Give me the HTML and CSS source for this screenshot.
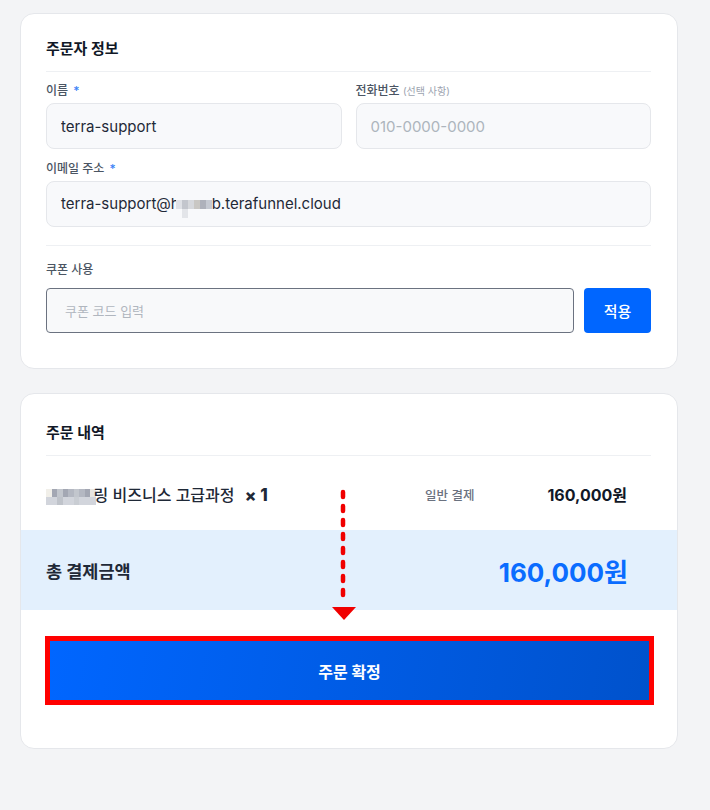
FILE: index.html
```html
<!DOCTYPE html>
<html lang="ko">

<head>
    <meta charset="UTF-8">
    <meta name="viewport" content="width=device-width, initial-scale=1.0">
    <title>주문서</title>
    <link rel="stylesheet" href="styles.css">
</head>

<body>
    <div class="wrap">
        <!-- 주문자 정보 -->
        <div class="card card-info">
            <h2 class="card-title">주문자 정보</h2>
            <div class="row">
                <div class="field">
                    <label>이름 <span class="req">*</span></label>
                    <input type="text" class="ipt" value="terra-support">
                </div>
                <div class="field">
                    <label>전화번호 <span class="opt">(선택 사항)</span></label>
                    <input type="text" class="ipt" placeholder="010-0000-0000">
                </div>
            </div>
            <div class="field field-mail">
                <label>이메일 주소 <span class="req">*</span></label>
                <div class="ipt">terra-support@h<span class="blur blur-mail"><i></i><i></i><i></i><i></i><i></i><i></i><i></i><i></i><i></i><i></i><i></i><i></i></span>b.terafunnel.cloud</div>
            </div>
            <div class="coupon">
                <label>쿠폰 사용</label>
                <div class="coupon-row">
                    <input type="text" class="coupon-ipt" placeholder="쿠폰 코드 입력">
                    <button class="coupon-btn">적용</button>
                </div>
            </div>
        </div>

        <!-- 주문 내역 -->
        <div class="card card-order">
            <h2 class="card-title">주문 내역</h2>
            <div class="item">
                <div class="item-name"><span class="blur blur-name"><i></i><i></i><i></i><i></i><i></i><i></i><i></i><i></i><i></i><i></i><i></i><i></i><i></i><i></i><i></i><i></i><i></i><i></i></span>링 비즈니스 고급과정 <b class="qty">× 1</b></div>
                <div class="item-pay">일반 결제</div>
                <div class="item-price">160,000원</div>
            </div>
            <div class="total">
                <span class="total-label">총 결제금액</span>
                <span class="total-price">160,000원</span>
            </div>
            <div class="confirm-box">
                <button class="confirm-btn">주문 확정</button>
            </div>

            <!-- 화살표 표시 -->
            <svg class="arrow-line" width="10" height="120" viewBox="0 0 10 120">
                <line x1="5" y1="3" x2="5" y2="114" stroke="#f00000" stroke-width="4.5" stroke-linecap="round" stroke-dasharray="5 9"></line>
            </svg>
            <div class="arrow-head"></div>
        </div>
    </div>
</body>

</html>
```

FILE: styles.css
```css
* {
    margin: 0;
    padding: 0;
    box-sizing: border-box;
}

body {
    background: #f3f4f6;
    font-family: "Inter", "Noto Sans CJK KR", sans-serif;
    color: #111827;
}

.wrap {
    width: 658px;
    margin-left: 20px;
    padding-top: 13px;
    display: flex;
    flex-direction: column;
    gap: 24px;
}

.card {
    background: #fff;
    border: 1px solid #e5e7eb;
    border-radius: 14px;
    padding: 25px 26px 35px 25px;
    position: relative;
}

.card-title {
    font-size: 15px;
    line-height: 20px;
    font-weight: 700;
    padding-bottom: 12px;
    border-bottom: 1px solid #eef0f3;
}

.row {
    display: flex;
    gap: 14px;
    margin-top: 11px;
}

.row .field {
    flex: 1;
}

.field label,
.coupon label {
    display: block;
    font-size: 12px;
    line-height: 16px;
    color: #4b5563;
    font-weight: 500;
    margin-bottom: 4px;
}

.req {
    color: #3b82f6;
    margin-left: 2px;
}

.opt {
    font-size: 10px;
    color: #9ca3af;
    font-weight: 400;
}

.ipt {
    display: block;
    width: 100%;
    height: 46px;
    border: 1px solid #e5e7eb;
    border-radius: 8px;
    background: #f8f9fb;
    padding: 0 14px;
    font-family: inherit;
    font-size: 15px;
    line-height: 44px;
    color: #1f2937;
    outline: none;
}

.ipt::placeholder {
    color: #adb5bd;
}

.field-mail {
    margin-top: 12px;
    padding-bottom: 18px;
    border-bottom: 1px solid #eef0f3;
}

.blur {
    display: inline-grid;
    vertical-align: middle;
}

.blur i {
    display: block;
}

.blur-mail {
    grid-template-columns: repeat(6, 6px);
    grid-auto-rows: 9px;
    margin-left: -4px;
    margin-top: 8px;
}

.blur-mail i:nth-child(1) { background: #dfe1e6; }
.blur-mail i:nth-child(2) { background: #c3c6cd; }
.blur-mail i:nth-child(3) { background: #d6d8dc; }
.blur-mail i:nth-child(4) { background: #c9c7c3; }
.blur-mail i:nth-child(5) { background: #aeb1bb; }
.blur-mail i:nth-child(6) { background: #c5c9d2; }
.blur-mail i:nth-child(7) { background: #f8f9fb; }
.blur-mail i:nth-child(8) { background: #e3e5e9; }
.blur-mail i:nth-child(n+9) { background: #f8f9fb; }

.blur-name {
    grid-template-columns: repeat(9, 5.5px);
    grid-auto-rows: 8px;
    margin-right: -2px;
}

.blur-name i:nth-child(odd) { background: #b4b8c2; }
.blur-name i:nth-child(even) { background: #a3a7b3; }
.blur-name i:nth-child(1) { background: #f1efe9; }
.blur-name i:nth-child(3n) { background: #c2c6cd; }
.blur-name i:nth-child(n+10) { background: #d2d5dc; }
.blur-name i:nth-child(9) { background: #e8e6e2; }
.blur-name i:nth-child(12) { background: #bfc3ca; }
.blur-name i:nth-child(15) { background: #c9cdd3; }

.coupon {
    margin-top: 16px;
}

.coupon label {
    margin-bottom: 10px;
}

.coupon-row {
    display: flex;
    gap: 10px;
}

.coupon-ipt {
    flex: 1;
    height: 45px;
    border: 1px solid #6b7280;
    border-radius: 4px;
    background: #f8f9fa;
    padding: 0 18px;
    font-family: inherit;
    font-size: 13px;
    outline: none;
}

.coupon-ipt::placeholder {
    color: #b0b6be;
}

.coupon-btn {
    width: 67px;
    height: 45px;
    border: none;
    border-radius: 4px;
    background: #0066ff;
    color: #fff;
    font-family: inherit;
    font-size: 15px;
    font-weight: 500;
}

.card-order {
    padding: 29px 26px 43px 25px;
}

.item {
    display: flex;
    align-items: center;
    height: 74px;
    padding-top: 2px;
}

.item-name {
    flex: 1;
    font-size: 16px;
    font-weight: 500;
    color: #1f2937;
}

.qty {
    font-weight: 800;
    margin-left: 6px;
    font-size: 17px;
}

.item-pay {
    font-size: 12.5px;
    color: #6b7280;
    font-weight: 500;
    margin-right: 73px;
}

.item-price {
    font-size: 16px;
    font-weight: 700;
    margin-right: 24px;
}

.total {
    display: flex;
    justify-content: space-between;
    align-items: center;
    height: 80px;
    margin: 0 -26px 0 -25px;
    padding: 0 49px 0 25px;
    background: #e3f0fd;
}

.total-label {
    font-size: 17.5px;
    font-weight: 700;
    color: #1f2937;
}

.total-price {
    font-size: 26px;
    font-weight: 700;
    color: #0a6cff;
}

.confirm-box {
    margin: 26px -3px 0 -1px;
    border: 5px solid #ff0000;
}

.confirm-btn {
    display: block;
    width: 100%;
    height: 59px;
    border: none;
    background: linear-gradient(100deg, #0066ff, #0052cc);
    color: #fff;
    font-family: inherit;
    font-size: 16px;
    font-weight: 700;
}

.arrow-line {
    position: absolute;
    left: 317px;
    top: 95px;
}

.arrow-head {
    position: absolute;
    left: 311px;
    top: 213px;
    width: 0;
    height: 0;
    border-left: 12.5px solid transparent;
    border-right: 12.5px solid transparent;
    border-top: 13px solid #f00000;
}
```
